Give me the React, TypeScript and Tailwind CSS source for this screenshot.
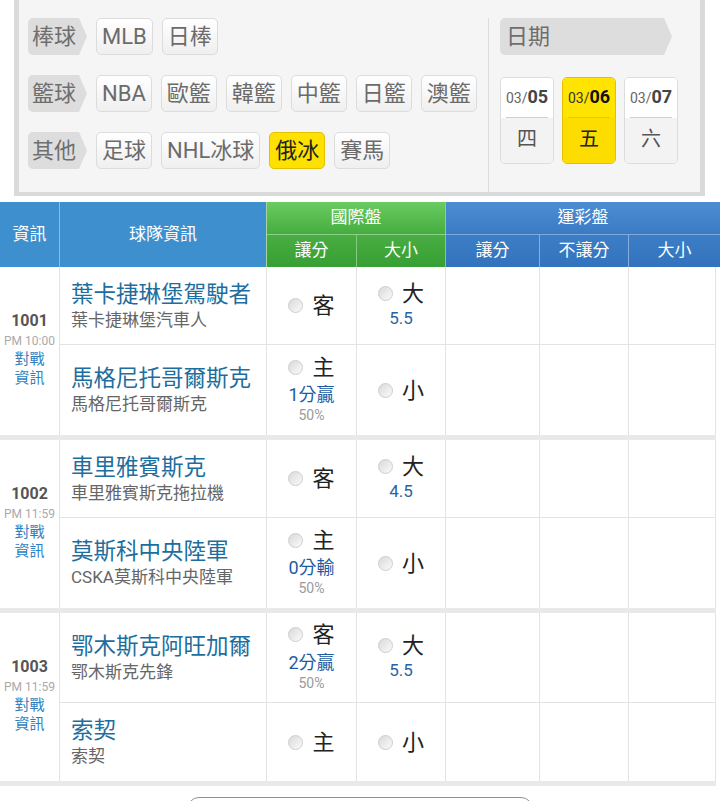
// Odds board: sport filter panel, date picker, and the handicap / over-under table.
import { Fragment } from "react";

interface Side {
  name: string;
  sub: string;
  pick: string;     // 客 / 主
  line?: string;    // handicap result text
  pct?: string;
  ou: string;       // 大 / 小
  ouLine?: string;
}

interface Game {
  no: string;
  time: string;
  rowsClass: string; // full class name, row heights differ with content
  teams: [Side, Side];
}

const games: Game[] = [
  {
    no: "1001",
    time: "PM 10:00",
    rowsClass: "grid-rows-[78px_90px]",
    teams: [
      { name: "葉卡捷琳堡駕駛者", sub: "葉卡捷琳堡汽車人", pick: "客", ou: "大", ouLine: "5.5" },
      { name: "馬格尼托哥爾斯克", sub: "馬格尼托哥爾斯克", pick: "主", line: "1分贏", pct: "50%", ou: "小" },
    ],
  },
  {
    no: "1002",
    time: "PM 11:59",
    rowsClass: "grid-rows-[78px_90px]",
    teams: [
      { name: "車里雅賓斯克", sub: "車里雅賓斯克拖拉機", pick: "客", ou: "大", ouLine: "4.5" },
      { name: "莫斯科中央陸軍", sub: "CSKA莫斯科中央陸軍", pick: "主", line: "0分輸", pct: "50%", ou: "小" },
    ],
  },
  {
    no: "1003",
    time: "PM 11:59",
    rowsClass: "grid-rows-[90px_78px]",
    teams: [
      { name: "鄂木斯克阿旺加爾", sub: "鄂木斯克先鋒", pick: "客", line: "2分贏", pct: "50%", ou: "大", ouLine: "5.5" },
      { name: "索契", sub: "索契", pick: "主", ou: "小" },
    ],
  },
];

const sportRows = [
  { label: "棒球", items: ["MLB", "日棒"] },
  { label: "籃球", items: ["NBA", "歐籃", "韓籃", "中籃", "日籃", "澳籃"] },
  { label: "其他", items: ["足球", "NHL冰球", "俄冰", "賽馬"] },
];

const dates = [
  { md: "03/", d: "05", wd: "四" },
  { md: "03/", d: "06", wd: "五", active: true },
  { md: "03/", d: "07", wd: "六" },
];

export default function App() {
  return (
    <div className="h-[801px] overflow-hidden bg-white [font-family:Roboto,'Noto_Sans_CJK_TC',sans-serif]">
      <FilterPanel />
      <div className="mt-[6px]">
        <TableHead />
        {games.map((g) => (
          <GameBlock key={g.no} game={g} />
        ))}
      </div>
      <div className="mx-auto mt-[11px] h-[44px] w-[346px] rounded-[12px] border border-[#7f95a8]" />
    </div>
  );
}

function ArrowTag({ label, width }: { label: string; width: string }) {
  return (
    <div
      className={`flex h-[37px] items-center rounded-l-[5px] bg-[#dddddd] pl-[4px] text-[22px] text-[#6e6e6e] [clip-path:polygon(0_0,calc(100%_-_8px)_0,100%_50%,calc(100%_-_8px)_100%,0_100%)] ${width}`}
    >
      {label}
    </div>
  );
}

function FilterPanel() {
  return (
    <div className="ml-[14px] flex h-[196px] w-[691px] border-x-[5px] border-b-[4px] border-[#dadada] bg-[#f5f5f5]">
      <div className="flex w-[469px] flex-col gap-[20px] pl-[9px] pt-[18px]">
        {sportRows.map((row) => (
          <div key={row.label} className="flex h-[37px] items-center gap-[9px]">
            <ArrowTag label={row.label} width="w-[59px]" />
            {row.items.map((it) =>
              it === "俄冰" ? (
                <div
                  key={it}
                  className="flex h-[37px] items-center rounded-[5px] border border-[#e3c000] bg-[#ffe100] px-[5px] text-[22px] text-[#222]"
                >
                  {it}
                </div>
              ) : (
                <div
                  key={it}
                  className="flex h-[37px] items-center rounded-[5px] border border-[#dcdcdc] bg-linear-to-b from-white to-[#efefef] px-[5px] text-[22px] text-[#6b6b6b]"
                >
                  {it}
                </div>
              )
            )}
          </div>
        ))}
      </div>

      <div className="mt-[18px] flex-1 border-l border-[#dcdcdc] pl-[11px]">
        <ArrowTag label="日期" width="w-[172px] pl-[6px]" />
        <div className="mt-[22px] flex gap-[8px]">
          {dates.map((d) => (
            <div
              key={d.d}
              className={`flex h-[87px] w-[54px] flex-col overflow-hidden rounded-[5px] border ${
                d.active ? "border-[#e3c000]" : "border-[#dcdcdc]"
              }`}
            >
              <div className={`flex h-[39px] items-center justify-center ${d.active ? "bg-[#ffe400]" : "bg-white"}`}>
                <span className="leading-[20px]">
                  <span className={`text-[14px] ${d.active ? "text-[#333]" : "text-[#666]"}`}>{d.md}</span>
                  <span className={`text-[18px] font-bold ${d.active ? "text-[#111]" : "text-[#444]"}`}>{d.d}</span>
                </span>
              </div>
              <div className={`px-[5px] ${d.active ? "bg-[#ffe400]" : "bg-white"}`}>
                <div className={`h-px ${d.active ? "bg-[#e6c700]" : "bg-[#cfcfcf]"}`} />
              </div>
              <div
                className={`flex flex-1 items-center justify-center pb-[4px] text-[20px] ${
                  d.active ? "bg-[#fddc00] text-[#222]" : "bg-[#f3f3f3] text-[#555]"
                }`}
              >
                {d.wd}
              </div>
            </div>
          ))}
        </div>
      </div>
    </div>
  );
}

function TableHead() {
  const green = "flex items-center justify-center bg-linear-to-b from-[#48ad42] to-[#379f33]";
  const blue = "flex items-center justify-center bg-linear-to-b from-[#3b7ec6] to-[#3373bd]";
  return (
    <div className="grid h-[65px] grid-cols-[60px_207px_90px_89px_94px_89px_91px] grid-rows-[33px_32px] text-[17px] text-white">
      <div className="row-span-2 flex items-center justify-center border-r border-[#86bde6] bg-[#3d90cd]">資訊</div>
      <div className="row-span-2 flex items-center justify-center border-r border-[#a6d5a0] bg-[#3d90cd]">球隊資訊</div>
      <div className="col-span-2 flex items-center justify-center border-b border-r border-[#8fd088] bg-linear-to-b from-[#6acb61] to-[#45ad3f]">
        國際盤
      </div>
      <div className="col-span-3 flex items-center justify-center border-b border-[#7eaadb] bg-linear-to-b from-[#4c8dd2] to-[#3a7bc4]">
        運彩盤
      </div>
      <div className={`${green} border-r border-[#86c980]`}>讓分</div>
      <div className={`${green} border-r border-[#86c980]`}>大小</div>
      <div className={`${blue} border-r border-[#86addb]`}>讓分</div>
      <div className={`${blue} border-r border-[#86addb]`}>不讓分</div>
      <div className={blue}>大小</div>
    </div>
  );
}

function Radio() {
  return (
    <span className="inline-block h-[15px] w-[15px] rounded-full border border-[#cdcdcd] bg-linear-to-br from-[#d9d9d9] to-[#fbfbfb]" />
  );
}

function GameBlock({ game }: { game: Game }) {
  return (
    <div
      className={`grid w-[716px] grid-cols-[60px_207px_90px_89px_94px_89px_87px] border-b-[5px] border-[#e9e9e9] ${game.rowsClass}`}
    >
      <div className="row-span-2 flex flex-col items-center justify-center border-r border-[#e3e3e3] pb-[4px]">
        <div className="text-[16px] font-bold leading-[22px] text-[#555]">{game.no}</div>
        <div className="text-[12px] leading-[18px] text-[#aaa]">{game.time}</div>
        <div className="text-center text-[15px] leading-[19px] text-[#2f7fc0]">
          對戰
          <br />
          資訊
        </div>
      </div>

      {game.teams.map((t, i) => {
        const cell = `border-r border-[#e3e3e3] ${i === 0 ? "border-b" : ""}`;
        return (
          <Fragment key={t.name}>
            <div className={`flex flex-col justify-center pl-[11px] ${cell}`}>
              <div className="text-[22.5px] leading-[28px] text-[#1d6e9e]">{t.name}</div>
              <div className="text-[17px] leading-[24px] text-[#666]">{t.sub}</div>
            </div>

            <div className={`flex flex-col items-center justify-center ${t.line ? "pb-[6px]" : ""} ${cell}`}>
              <div className="flex h-[28px] items-center gap-[9px]">
                <Radio />
                <span className="text-[22px] text-[#222]">{t.pick}</span>
              </div>
              {t.line && <div className="text-[18px] leading-[28px] text-[#1c5ca3]">{t.line}</div>}
              {t.pct && <div className="text-[14px] leading-[12px] text-[#9a9a9a]">{t.pct}</div>}
            </div>

            <div className={`flex flex-col items-center justify-center ${t.ouLine ? "pb-[4px]" : ""} ${cell}`}>
              <div className="flex h-[28px] items-center gap-[9px]">
                <Radio />
                <span className="text-[22px] text-[#222]">{t.ou}</span>
              </div>
              {t.ouLine && <div className="text-[17px] leading-[20px] text-[#2a62a0]">{t.ouLine}</div>}
            </div>

            <div className={cell} />
            <div className={cell} />
            <div className={cell} />
          </Fragment>
        );
      })}
    </div>
  );
}
